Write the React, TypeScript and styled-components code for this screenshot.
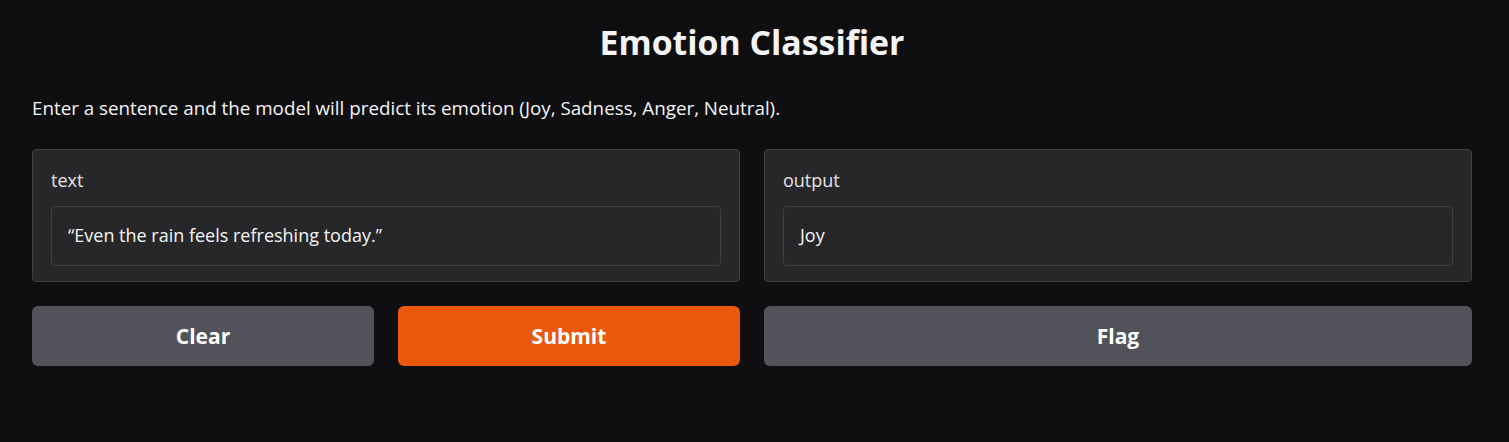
import React from "react";
import styled, { createGlobalStyle } from "styled-components";

const Global = createGlobalStyle`
  html, body { margin: 0; padding: 0; background: #0f0f11; }
  body { font-family: "Open Sans", "Noto Sans", sans-serif; color: #f4f4f5; }
  * { box-sizing: border-box; }
`;

const Page = styled.div`
  width: 1509px;
  height: 442px;
  background: #0f0f11;
  padding: 20px 37px 0 32px;
  display: flex;
  flex-direction: column;
`;

const Title = styled.h1`
  margin: 0;
  text-align: center;
  font-size: 33.8px;
  font-weight: 700;
  line-height: 44px;
  color: #f4f4f5;
`;

const Description = styled.p`
  margin: 32px 0 0;
  font-size: 18.8px;
  line-height: 24px;
  color: #f4f4f5;
`;

const Columns = styled.div`
  margin-top: 29px;
  display: grid;
  grid-template-columns: 1fr 1fr;
  column-gap: 24px;
`;

const Column = styled.div`
  display: flex;
  flex-direction: column;
  gap: 24px;
`;

const Block = styled.div`
  background: #27272a;
  border: 1px solid #3f3f46;
  border-radius: 4px;
  padding: 18px 18px 15px;
  display: flex;
  flex-direction: column;
  gap: 14px;
`;

const Label = styled.span`
  font-size: 18px;
  line-height: 24px;
  color: #e4e4e7;
`;

const Field = styled.div`
  height: 60px;
  background: #27272a;
  border: 1px solid #3f3f46;
  border-radius: 4px;
  padding: 0 16px 2px;
  display: flex;
  align-items: center;
  font-size: 18px;
  color: #f4f4f5;
`;

const ButtonRow = styled.div`
  display: grid;
  grid-template-columns: 1fr 1fr;
  gap: 24px;
`;

const Button = styled.button<{ $primary?: boolean }>`
  height: 60px;
  border: none;
  border-radius: 6px;
  background: ${(p) => (p.$primary ? "#ea580c" : "#52525b")};
  color: #ffffff;
  font-family: "Open Sans", "Noto Sans", sans-serif;
  font-size: 21px;
  font-weight: 700;
  cursor: pointer;
`;

export default function App() {
  return (
    <>
      <Global />
      <Page>
        <Title>Emotion Classifier</Title>
        <Description>
          Enter a sentence and the model will predict its emotion (Joy, Sadness, Anger, Neutral).
        </Description>
        <Columns>
          <Column>
            <Block>
              <Label>text</Label>
              <Field>“Even the rain feels refreshing today.”</Field>
            </Block>
            <ButtonRow>
              <Button>Clear</Button>
              <Button $primary>Submit</Button>
            </ButtonRow>
          </Column>
          <Column>
            <Block>
              <Label>output</Label>
              <Field>Joy</Field>
            </Block>
            <Button>Flag</Button>
          </Column>
        </Columns>
      </Page>
    </>
  );
}
